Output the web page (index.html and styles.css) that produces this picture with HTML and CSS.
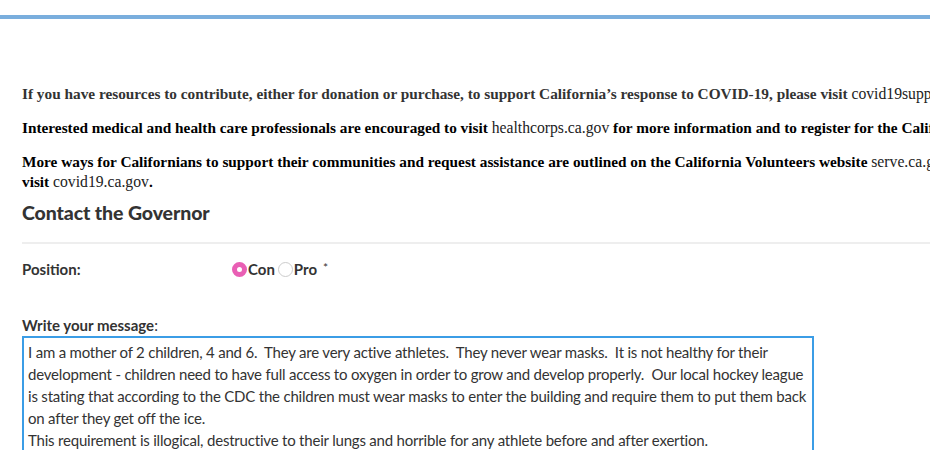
FILE: index.html
```html
<!DOCTYPE html>
<html>
<head>
<meta charset="utf-8">
<link rel="stylesheet" href="styles.css">
</head>
<body>
<div class="topbar"></div>
<main class="content">
  <section class="notices">
    <p class="notice muted">If you have resources to contribute, either for donation or purchase, to support California’s response to COVID-19, please visit <a class="link">covid19supplies.ca.gov</a>.</p>
    <p class="notice">Interested medical and health care professionals are encouraged to visit <a class="link">healthcorps.ca.gov</a> for more information and to register for the California Health Corps.</p>
    <p class="notice last">More ways for Californians to support their communities and request assistance are outlined on the California Volunteers website <a class="link">serve.ca.gov</a>. For the latest information,<br>visit <a class="link">covid19.ca.gov</a>.</p>
  </section>
  <section class="contact">
    <h2 class="contact-title">Contact the Governor</h2>
    <div class="position-row">
      <span class="field-label">Position:</span>
      <div class="radios">
        <span class="radio checked"></span><span class="radio-label">Con</span>
        <span class="radio"></span><span class="radio-label">Pro</span>
        <span class="required">*</span>
      </div>
    </div>
    <div class="message-label"><b>Write your message</b>:</div>
    <div class="textarea">I am a mother of 2 children, 4 and 6.&nbsp; They are very active athletes.&nbsp; They never wear masks.&nbsp; It is not healthy for their development - children need to have full access to oxygen in order to grow and develop properly.&nbsp; Our local hockey league is stating that according to the CDC the children must wear masks to enter the building and require them to put them back on after they get off the ice.<br>This requirement is illogical, destructive to their lungs and horrible for any athlete before and after exertion.</div>
  </section>
</main>
</body>
</html>
```
FILE: styles.css
```css
html, body {
  margin: 0;
  padding: 0;
  background: #fff;
  overflow: hidden;
}
body {
  width: 930px;
  height: 450px;
}
.topbar {
  margin-top: 15px;
  height: 4px;
  background: #7aaedd;
}
.content {
  padding: 65px 0 0 22px;
}
.notices {
  width: 1400px;
}
.notice {
  margin: 0 0 14px;
  font-family: "Liberation Serif", serif;
  font-weight: bold;
  font-size: 15.3px;
  line-height: 20px;
  color: #000;
  white-space: nowrap;
}
.notice.last {
  margin-bottom: 8px;
}
.notice.muted {
  color: #333;
}
.link {
  font-weight: normal;
  font-size: 15.7px;
  color: #222;
}
.contact {
  font-family: Lato, sans-serif;
  color: #333;
}
.contact-title {
  margin: 0;
  padding: 0 0 16px;
  font-size: 19.5px;
  line-height: 26px;
  font-weight: 900;
  letter-spacing: -0.1px;
  border-bottom: 2px solid #eee;
}
.position-row {
  display: flex;
  align-items: center;
  padding-top: 13px;
  height: 24px;
}
.field-label {
  width: 210px;
  font-weight: bold;
  font-size: 15px;
}
.radios {
  display: flex;
  align-items: center;
  font-size: 15px;
  font-weight: bold;
}
.radio {
  width: 15px;
  height: 15px;
  border-radius: 50%;
  border: 1px solid #ccc;
  box-sizing: border-box;
  margin-right: 1px;
}
.radio.checked {
  border: 5px solid #e95fb4;
  background: #fff;
}
.radio-label {
  margin-right: 3px;
}
.required {
  font-weight: normal;
  font-size: 12px;
  margin-left: 3px;
  align-self: flex-start;
}
.message-label {
  margin-top: 35px;
  font-size: 15px;
  line-height: 18px;
}
.textarea {
  margin-top: 2px;
  width: 780px;
  height: 200px;
  border: 2px solid #3b9de6;
  padding: 3px 4px;
  font-size: 15px;
  letter-spacing: -0.2px;
  line-height: 22px;
  color: #333;
  box-sizing: content-box;
}
```
